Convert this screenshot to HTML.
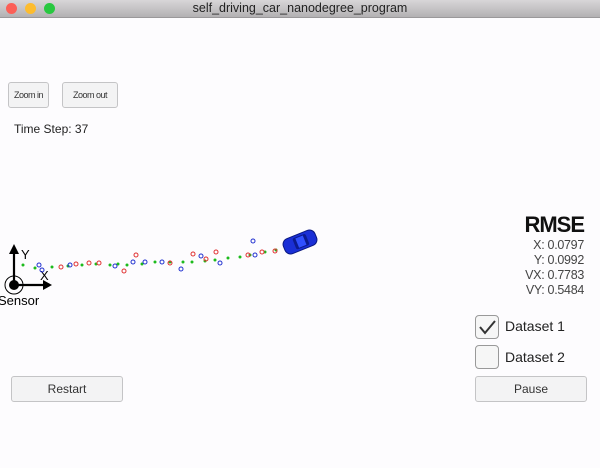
<!DOCTYPE html>
<html><head><style>
body{margin:0;width:600px;height:468px;overflow:hidden;background:#fdfcfe;font-family:"Liberation Sans",sans-serif;position:relative}
.tb{position:absolute;left:0;top:0;width:600px;height:17px;background:linear-gradient(#d8d6d8,#b3b1b3);border-bottom:1px solid #9a989a;text-align:center;font-size:12.5px;line-height:17px;color:#222}
.dot{position:absolute;top:3px;width:11px;height:11px;border-radius:50%}
.btn{position:absolute;background:#f3f3f4;border:1px solid #c4c4c6;border-radius:3px;text-align:center;color:#333;box-sizing:border-box}
.a{position:absolute;white-space:nowrap}
.cb{position:absolute;width:24px;height:24px;border:1px solid #999;border-radius:4px;background:#f6f6f6;box-sizing:border-box}
</style></head><body>
<div class="tb">self_driving_car_nanodegree_program</div>
<div class="dot" style="left:6px;background:#fc5f57"></div>
<div class="dot" style="left:25px;background:#fdbc2e"></div>
<div class="dot" style="left:44px;background:#28c840"></div>
<div class="btn" style="left:8px;top:82px;width:41px;height:26px;font-size:9px;line-height:24px;letter-spacing:-0.5px">Zoom in</div>
<div class="btn" style="left:62px;top:82px;width:56px;height:26px;font-size:9px;line-height:24px;letter-spacing:-0.5px">Zoom out</div>
<div class="a" style="left:14px;top:122px;font-size:12px;color:#222">Time Step: 37</div>
<svg class="a" style="left:0;top:0" width="600" height="468">
<g stroke="#000" stroke-width="2.2" fill="#000">
<line x1="14" y1="285" x2="14" y2="252"/><polygon points="9,254 14,244 19,254" stroke="none"/>
<line x1="14" y1="285" x2="45" y2="285"/><polygon points="43,280 52,285 43,290" stroke="none"/>
</g>
<circle cx="14" cy="285" r="9" fill="none" stroke="#000" stroke-width="1"/>
<circle cx="14" cy="285" r="5" fill="#000"/>
<text x="21" y="259" font-size="13" font-family="Liberation Sans">Y</text>
<text x="40" y="280" font-size="13" font-family="Liberation Sans">X</text>
<text x="-2" y="305" font-size="13" font-family="Liberation Sans">Sensor</text>
<g fill="#1dbb1d">
<circle cx="23" cy="265" r="1.5"/><circle cx="35" cy="268" r="1.5"/><circle cx="52" cy="267" r="1.5"/><circle cx="68" cy="266" r="1.5"/><circle cx="82" cy="265" r="1.5"/><circle cx="96" cy="264" r="1.5"/><circle cx="110" cy="265" r="1.5"/><circle cx="118" cy="264" r="1.5"/><circle cx="127" cy="265" r="1.5"/><circle cx="142" cy="264" r="1.5"/><circle cx="155" cy="262" r="1.5"/><circle cx="170" cy="262" r="1.5"/><circle cx="183" cy="262" r="1.5"/><circle cx="192" cy="262" r="1.5"/><circle cx="205" cy="261" r="1.5"/><circle cx="215" cy="260" r="1.5"/><circle cx="228" cy="258" r="1.5"/><circle cx="240" cy="257" r="1.5"/><circle cx="250" cy="255" r="1.5"/><circle cx="265" cy="252" r="1.5"/><circle cx="276" cy="250" r="1.5"/>
</g>
<g fill="none" stroke="#e03030" stroke-width="1">
<circle cx="61" cy="267" r="2"/><circle cx="76" cy="264" r="2"/><circle cx="89" cy="263" r="2"/><circle cx="99" cy="263" r="2"/><circle cx="136" cy="255" r="2"/><circle cx="124" cy="271" r="2"/><circle cx="170" cy="263" r="2"/><circle cx="193" cy="254" r="2"/><circle cx="206" cy="259" r="2"/><circle cx="216" cy="252" r="2"/><circle cx="248" cy="255" r="2"/><circle cx="262" cy="252" r="2"/><circle cx="275" cy="251" r="2"/>
</g>
<g fill="none" stroke="#2030d0" stroke-width="1">
<circle cx="39" cy="265" r="2"/><circle cx="42" cy="270" r="2"/><circle cx="70" cy="265" r="2"/><circle cx="115" cy="266" r="2"/><circle cx="133" cy="262" r="2"/><circle cx="145" cy="262" r="2"/><circle cx="162" cy="262" r="2"/><circle cx="181" cy="269" r="2"/><circle cx="201" cy="256" r="2"/><circle cx="220" cy="263" r="2"/><circle cx="253" cy="241" r="2"/><circle cx="255" cy="255" r="2"/>
</g>
<g transform="translate(300,242) rotate(-22)">
<rect x="-17" y="-8" width="34" height="16" rx="6" fill="#1a2fd6" stroke="#0a1880"/>
<rect x="-6" y="-6" width="14" height="12" rx="2" fill="#0c1a90"/>
<rect x="-3" y="-5" width="8" height="10" fill="#3050ff"/>
</g>
</svg>
<div class="a" style="right:16px;top:212px;font-size:22px;font-weight:bold;color:#111;letter-spacing:-1px">RMSE</div>
<div class="a" style="right:16px;top:238px;font-size:12.5px;color:#444;text-align:right;line-height:15px;letter-spacing:-0.3px">X: 0.0797<br>Y: 0.0992<br>VX: 0.7783<br>VY: 0.5484</div>
<div class="cb" style="left:475px;top:315px"><svg width="22" height="22"><path d="M4 11 L9 17 L19 5" fill="none" stroke="#333" stroke-width="2"/></svg></div>
<div class="a" style="left:505px;top:318px;font-size:14px;color:#222">Dataset 1</div>
<div class="cb" style="left:475px;top:345px"></div>
<div class="a" style="left:505px;top:349px;font-size:14px;color:#222">Dataset 2</div>
<div class="btn" style="left:11px;top:376px;width:112px;height:26px;font-size:12px;line-height:24px">Restart</div>
<div class="btn" style="left:475px;top:376px;width:112px;height:26px;font-size:12px;line-height:24px">Pause</div>
</body></html>
